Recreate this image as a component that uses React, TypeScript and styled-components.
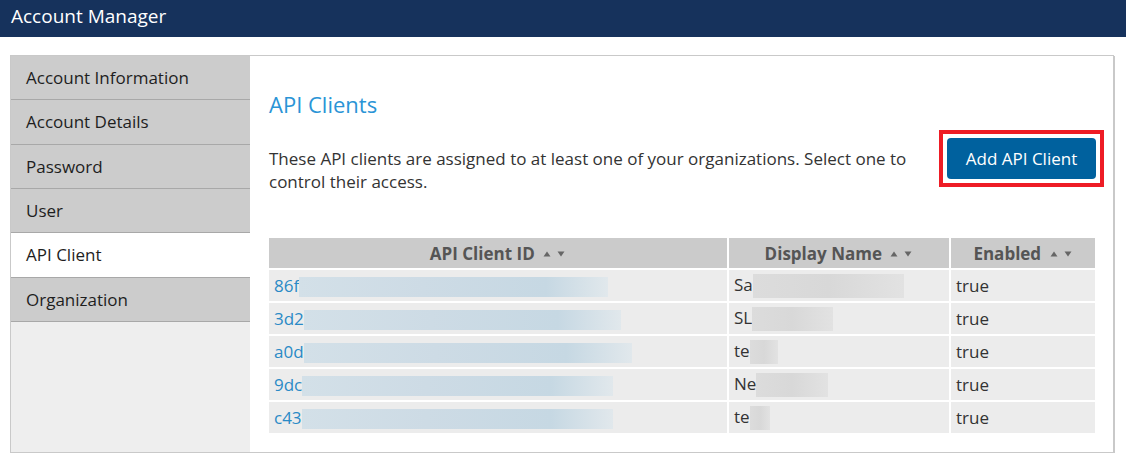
import React from 'react'
import styled, { createGlobalStyle } from 'styled-components'

const GlobalStyle = createGlobalStyle`
  body {
    margin: 0;
    background: #ffffff;
    font-family: 'Open Sans', 'Liberation Sans', Arial, sans-serif;
    color: #333333;
  }
`

type Client = {
  id: string
  idBlur: number
  name: string
  nameBlur: number
  enabled: boolean
}

const clients: Client[] = [
  { id: '86f', idBlur: 309, name: 'Sa', nameBlur: 151, enabled: true },
  { id: '3d2', idBlur: 317, name: 'SL', nameBlur: 81, enabled: true },
  { id: 'a0d', idBlur: 328, name: 'te', nameBlur: 28, enabled: true },
  { id: '9dc', idBlur: 311, name: 'Ne', nameBlur: 72, enabled: true },
  { id: 'c43', idBlur: 311, name: 'te', nameBlur: 20, enabled: true },
]

const navItems = [
  'Account Information',
  'Account Details',
  'Password',
  'User',
  'API Client',
  'Organization',
]

const SortArrows = () => (
  <Arrows>
    <svg width="23" height="6" viewBox="0 0 23 6">
      <path d="M0.5 5.5 L4 0.5 L7.5 5.5 Z" fill="#666" />
      <path d="M14.5 0.5 L21.5 0.5 L18 5.5 Z" fill="#666" />
    </svg>
  </Arrows>
)

const App = () => {
  const active = 'API Client'
  return (
    <>
      <GlobalStyle />
      <TopBar>Account Manager</TopBar>
      <Panel>
        <Sidebar>
          {navItems.map((item) => (
            <NavItem key={item} $active={item === active}>
              {item}
            </NavItem>
          ))}
        </Sidebar>
        <Content>
          <Heading>API Clients</Heading>
          <IntroRow>
            <Intro>
              These API clients are assigned to at least one of your organizations. Select one to
              control their access.
            </Intro>
            <Highlight>
              <PrimaryButton>Add API Client</PrimaryButton>
            </Highlight>
          </IntroRow>
          <Table>
            <colgroup>
              <col style={{ width: 459 }} />
              <col style={{ width: 222 }} />
              <col />
            </colgroup>
            <thead>
              <tr>
                <Th>
                  API Client ID <SortArrows />
                </Th>
                <Th>
                  Display Name <SortArrows />
                </Th>
                <Th>
                  Enabled <SortArrows />
                </Th>
              </tr>
            </thead>
            <tbody>
              {clients.map((c, i) => (
                <tr key={i}>
                  <Td>
                    <IdLink href="#">{c.id}</IdLink>
                    <Redacted $tone="blue" style={{ width: c.idBlur }} />
                  </Td>
                  <Td>
                    {c.name}
                    <Redacted $tone="gray" style={{ width: c.nameBlur }} />
                  </Td>
                  <Td>{c.enabled ? 'true' : 'false'}</Td>
                </tr>
              ))}
            </tbody>
          </Table>
        </Content>
      </Panel>
    </>
  )
}

export default App

const TopBar = styled.div`
  height: 37px;
  background: #16325c;
  color: #ffffff;
  font-size: 19px;
  line-height: 33px;
  padding-left: 11px;
`

const Panel = styled.div`
  display: flex;
  margin: 18px 12px 0 10px;
  height: 396px;
  border: 1px solid #c9c9c9;
  box-shadow: 1px 1px 0 #c9c9c9;
`

const Sidebar = styled.nav`
  width: 239px;
  flex-shrink: 0;
  background: #eeeeee;
  display: flex;
  flex-direction: column;
`

const NavItem = styled.div<{ $active?: boolean }>`
  height: 44.35px;
  box-sizing: border-box;
  padding-left: 15px;
  line-height: 43px;
  font-size: 17px;
  color: #1e1e1e;
  background: ${(p) => (p.$active ? '#ffffff' : '#cccccc')};
  border-bottom: 1px solid #a8a8a8;
`

const Content = styled.main`
  flex: 1;
  padding: 34px 18px 0 19px;
`

const Heading = styled.h2`
  margin: 0;
  font-size: 22px;
  font-weight: 400;
  line-height: 28px;
  color: #2a94d6;
`

const IntroRow = styled.div`
  display: flex;
  align-items: flex-start;
  justify-content: space-between;
  margin-top: 12px;
`

const Intro = styled.p`
  margin: 17px 0 0;
  width: 650px;
  font-size: 17px;
  line-height: 23px;
  color: #333333;
`

const Highlight = styled.div`
  border: 4px solid #ee1c25;
  padding: 4px;
  margin-right: -9px;
`

const PrimaryButton = styled.button`
  display: block;
  width: 149px;
  height: 41px;
  border: none;
  border-radius: 4px;
  background: #00619e;
  color: #ffffff;
  font-family: inherit;
  font-size: 17px;
`

const Table = styled.table`
  margin-top: 45px;
  width: 100%;
  border-collapse: collapse;
  font-size: 17px;
`

const Th = styled.th`
  height: 30px;
  padding: 0;
  background: #cbcbcb;
  color: #555555;
  font-weight: 700;
  text-align: center;
  & + & {
    border-left: 2px solid #ffffff;
  }
`

const Arrows = styled.span`
  display: inline-block;
  margin-left: 4px;
  vertical-align: 3px;
  svg {
    display: block;
  }
`

const Td = styled.td`
  height: 31px;
  padding: 0 0 0 5px;
  background: #ececec;
  border-top: 2px solid #ffffff;
  color: #333333;
  white-space: nowrap;
  & + & {
    border-left: 2px solid #ffffff;
  }
`

const IdLink = styled.a`
  color: #2a8ac6;
  text-decoration: none;
`

const Redacted = styled.span<{ $tone: 'blue' | 'gray' }>`
  display: inline-block;
  height: ${(p) => (p.$tone === 'blue' ? '20px' : '24px')};
  vertical-align: middle;
  background: ${(p) =>
    p.$tone === 'blue'
      ? 'linear-gradient(90deg, #d3e0e8 0%, #cddbe5 40%, #c6d8e3 80%, #e1e8ec 100%)'
      : 'linear-gradient(90deg, #dcdcdc 0%, #d8d8d8 50%, #e2e2e2 100%)'};
`
